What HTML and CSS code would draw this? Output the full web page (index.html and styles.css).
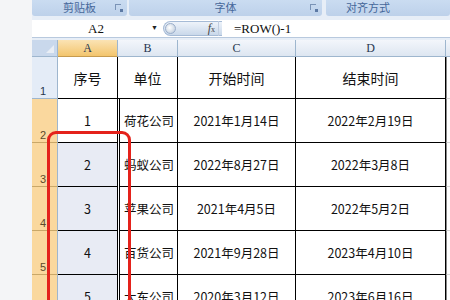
FILE: index.html
```html
<!DOCTYPE html>
<html lang="zh-CN">
<head>
  <meta charset="UTF-8" />
  <title>Excel ROW</title>
  <link rel="stylesheet" href="styles.css">
</head>
<body>
  <div class="app">
    <div class="side"></div>
    <div class="main">
      <!-- Ribbon group labels -->
      <div class="ribbon">
        <div class="group g-clip">剪贴板<span class="launcher"></span></div>
        <div class="group g-font">字体<span class="launcher"></span></div>
        <div class="group g-align">对齐方式</div>
      </div>

      <!-- Formula bar -->
      <div class="formula-bar">
        <div class="name-box">A2<span class="arrow">▼</span></div>
        <div class="fx-pill">
          <span class="knob"></span>
          <span class="fx"><i>f</i><small>x</small></span>
        </div>
        <div class="formula">=ROW()-1</div>
      </div>

      <!-- Sheet -->
      <div class="sheet">
        <div class="corner"><span class="tri"></span></div>
        <div class="col-head sel">A</div>
        <div class="col-head">B</div>
        <div class="col-head">C</div>
        <div class="col-head">D</div>
        <div class="col-head last"></div>

        <div class="row-head">1</div>
        <div class="cell title c">序号</div>
        <div class="cell title c">单位</div>
        <div class="cell title c">开始时间</div>
        <div class="cell title c">结束时间</div>
        <div class="cell end"></div>

        <div class="row-head sel">2</div>
        <div class="cell c">1</div>
        <div class="cell l">荷花公司</div>
        <div class="cell c">2021年1月14日</div>
        <div class="cell c">2022年2月19日</div>
        <div class="cell end"></div>

        <div class="row-head sel">3</div>
        <div class="cell c hl">2</div>
        <div class="cell l">蚂蚁公司</div>
        <div class="cell c">2022年8月27日</div>
        <div class="cell c">2022年3月8日</div>
        <div class="cell end"></div>

        <div class="row-head sel">4</div>
        <div class="cell c hl">3</div>
        <div class="cell l">苹果公司</div>
        <div class="cell c">2021年4月5日</div>
        <div class="cell c">2022年5月2日</div>
        <div class="cell end"></div>

        <div class="row-head sel">5</div>
        <div class="cell c hl">4</div>
        <div class="cell l">百货公司</div>
        <div class="cell c">2021年9月28日</div>
        <div class="cell c">2023年4月10日</div>
        <div class="cell end"></div>

        <div class="row-head sel">6</div>
        <div class="cell c hl">5</div>
        <div class="cell l">大东公司</div>
        <div class="cell c">2020年3月12日</div>
        <div class="cell c">2023年6月16日</div>
        <div class="cell end"></div>

        <!-- red marker drawn over column A -->
        <div class="marker"></div>
      </div>
    </div>
  </div>
</body>
</html>
```

FILE: styles.css
```css
body {
  margin: 0;
  width: 450px;
  height: 300px;
  overflow: hidden;
  background: #f4f5f7;
  font-family: "Noto Sans CJK SC", "Liberation Sans", sans-serif;
}

.app {
  display: flex;
  height: 300px;
}

.side {
  width: 32px;
  flex: none;
  background: #f4f5f7;
}

.main {
  flex: 1;
  background: #e7eef7;
  overflow: hidden;
}

/* ribbon */
.ribbon {
  display: flex;
  height: 16px;
  gap: 2px;
}

.group {
  position: relative;
  background: linear-gradient(#cadcf1, #bdd1ea);
  color: #45679a;
  font-size: 11px;
  line-height: 15px;
  text-align: center;
  border-radius: 0 0 3px 3px;
}

.g-clip { width: 95px; }
.g-font { width: 193px; margin-right: 2px; }
.g-align { flex: 1; padding-right: 40px; }

.launcher {
  position: absolute;
  right: 6px;
  top: 4px;
  width: 5px;
  height: 5px;
  border: 1px solid #7a93b6;
  border-width: 1px 0 0 1px;
}

.launcher::after {
  content: "";
  position: absolute;
  right: -2px;
  bottom: -2px;
  width: 3px;
  height: 3px;
  background: #5d7aa5;
}

/* formula bar */
.formula-bar {
  display: flex;
  align-items: center;
  height: 17px;
  margin-top: 4px;
  background: #fff;
  border-bottom: 1px solid #b8c9de;
  font-family: "Liberation Serif", serif;
  font-size: 13px;
  color: #111;
}

.name-box {
  position: relative;
  width: 128px;
  text-align: center;
  padding-right: 14px;
  box-sizing: border-box;
  padding-left: 14px;
}

.arrow {
  position: absolute;
  right: 2px;
  top: 3px;
  font-size: 7px;
  color: #222;
}

.fx-pill {
  display: flex;
  align-items: center;
  justify-content: space-between;
  width: 59px;
  height: 15px;
  margin-left: 3px;
  border-radius: 8px 0 0 8px;
  background: linear-gradient(#eef3fa, #c9d8ea);
  border: 1px solid #a6bbd6;
  border-right: none;
  box-sizing: border-box;
}

.knob {
  width: 11px;
  height: 11px;
  margin-left: 1px;
  border-radius: 50%;
  background: radial-gradient(circle at 40% 40%, #fff, #b7c6d8);
  border: 1px solid #9aaecb;
  box-sizing: border-box;
}

.fx {
  color: #444;
  font-size: 12px;
  margin-right: 3px;
  border-right: 1px solid #c0cde0;
  padding-right: 3px;
}

.fx small {
  font-size: 8px;
}

.formula {
  padding-left: 12px;
}

/* sheet */
.sheet {
  position: relative;
  display: grid;
  grid-template-columns: 26px 60px 60px 118px 150px 1fr;
  grid-template-rows: 17px 42px 44px 44px 44px 44px 44px;
  margin-top: 2px;
  background: #fff;
}

.corner {
  position: relative;
  background: #c9d8ec;
  border-right: 1px solid #9eb6ce;
  border-bottom: 1px solid #9eb6ce;
}

.tri {
  position: absolute;
  right: 3px;
  bottom: 3px;
  border-left: 8px solid transparent;
  border-bottom: 8px solid #e9eef5;
}

.col-head {
  background: linear-gradient(#f3f6fb, #dde6f1);
  border-right: 1px solid #9eb6ce;
  border-bottom: 1px solid #9eb6ce;
  font-family: "Liberation Serif", serif;
  font-size: 12px;
  color: #27364f;
  text-align: center;
  line-height: 16px;
}

.col-head.sel {
  background: linear-gradient(#fbe3b4, #f3c56d);
  border-bottom-color: #c69b4f;
}

.col-head.last {
  border-right: none;
}

.row-head {
  display: flex;
  align-items: flex-end;
  padding: 0 0 1px 8px;
  background: #e4ecf7;
  border-right: 1px solid #9eb6ce;
  border-bottom: 1px solid #9eb6ce;
  font-family: "Liberation Sans", sans-serif;
  font-size: 11px;
  color: #27364f;
}

.row-head.sel {
  background: #fad89e;
  border-bottom-color: #c9a768;
  color: #5b4a2a;
}

.cell {
  display: flex;
  align-items: center;
  border-right: 1px solid #000;
  border-bottom: 1px solid #000;
  font-size: 12.5px;
  color: #111;
  white-space: nowrap;
  overflow: hidden;
}

.cell.c { justify-content: center; }
.cell.l { padding-left: 4px; border-left: 1px solid #000; margin-left: 1px; }
.cell.title { font-size: 14px; }
.cell.hl { background: #e8ebf4; }

.cell.end {
  border-right: none;
  border-bottom-color: #d4d4d4;
  border-left: 1px solid #888;
}

.marker {
  position: absolute;
  left: 15px;
  top: 91px;
  width: 78px;
  height: 240px;
  border: 3px solid #e4221b;
  border-radius: 9px;
}
```
